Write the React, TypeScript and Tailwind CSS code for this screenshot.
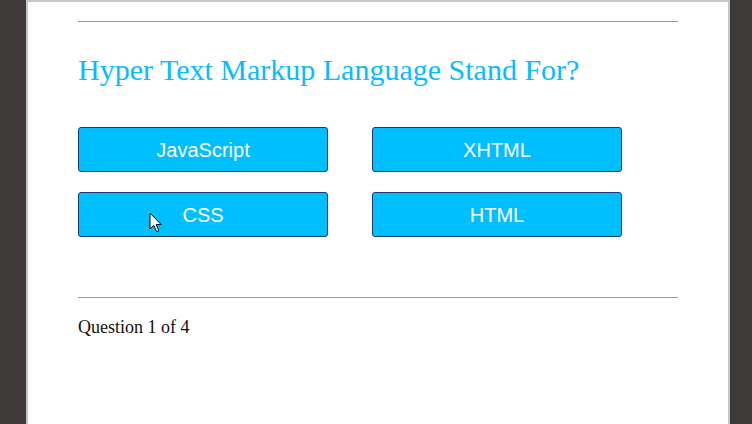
import React from 'react';

const answers = ['JavaScript', 'XHTML', 'CSS', 'HTML'];

const Cursor = () => (
    <svg
        className="absolute left-[121px] top-[210px]"
        width="14"
        height="21"
        viewBox="0 0 14 21"
    >
        <path
            d="M1 1 L1 17 L4.8 13.4 L7.6 19.6 L9.8 18.6 L7.1 12.6 L12.2 12.6 Z"
            fill="#fff"
            stroke="#000"
            strokeWidth="1"
            strokeLinejoin="miter"
        />
    </svg>
);

export default function App() {
    return (
        <div className="h-[424px] overflow-hidden bg-[#3e3a39] pl-[26px]">
            <div className="relative h-full w-[704px] border-2 border-b-0 border-[#c6c6c6] bg-[#fefefe] px-[50px] pt-[19px]">
                <div className="h-px bg-[#9a9a9a]" />

                <h1 className="mt-[31px] text-[30px] leading-[34px] text-[#08bcff] font-['Liberation_Serif',serif]">
                    Hyper Text Markup Language Stand For?
                </h1>

                {/* answer buttons */}
                <div className="mt-[40px] grid grid-cols-[250px_250px] gap-x-[44px] gap-y-[20px]">
                    {answers.map((a) => (
                        <button
                            key={a}
                            className="flex h-[45px] items-center justify-center rounded-[3px] border border-[#1d3b6a] bg-[#00bfff] text-[20px] text-white font-['Liberation_Sans',Arial,sans-serif]"
                        >
                            {a}
                        </button>
                    ))}
                </div>

                <div className="mt-[60px] h-px bg-[#9a9a9a]" />

                <p className="mt-[18px] text-[18px] leading-[22px] text-[#111] font-['Liberation_Serif',serif]">
                    Question 1 of 4
                </p>

                <Cursor />
            </div>
        </div>
    );
}
